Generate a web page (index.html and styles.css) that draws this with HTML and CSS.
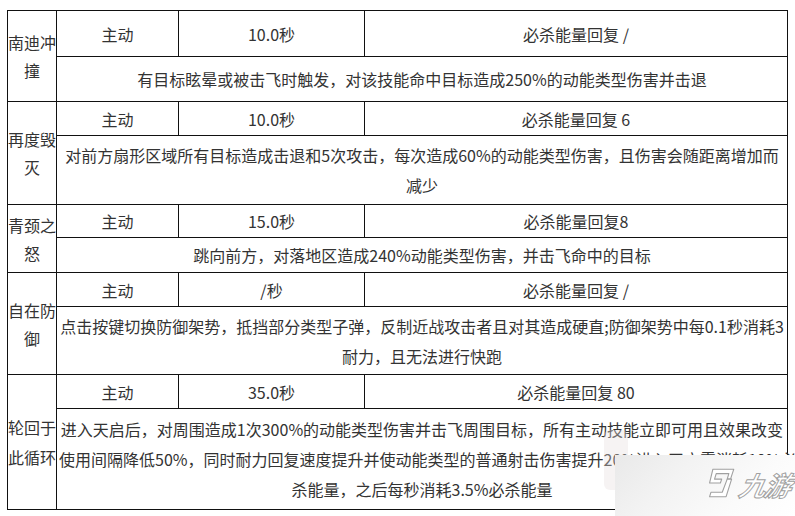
FILE: index.html
```html
<!DOCTYPE html>
<html lang="zh-CN">
<head>
<meta charset="utf-8">
<title>技能表</title>
<link rel="stylesheet" href="styles.css">
</head>
<body>
<div class="page">
<table class="skills">
  <colgroup>
    <col class="c-name"><col class="c-type"><col class="c-cd"><col class="c-energy">
  </colgroup>
  <tr class="h46">
    <td rowspan="2" class="name">南迪冲<br>撞</td>
    <td>主动</td><td>10.0秒</td><td>必杀能量回复 /</td>
  </tr>
  <tr class="h45">
    <td colspan="3" class="desc">有目标眩晕或被击飞时触发，对该技能命中目标造成250%的动能类型伤害并击退</td>
  </tr>
  <tr class="h34">
    <td rowspan="2" class="name">再度毁<br>灭</td>
    <td>主动</td><td>10.0秒</td><td>必杀能量回复 6</td>
  </tr>
  <tr class="h69">
    <td colspan="3" class="desc">对前方扇形区域所有目标造成击退和5次攻击，每次造成60%的动能类型伤害，且伤害会随距离增加而<br>减少</td>
  </tr>
  <tr class="h33">
    <td rowspan="2" class="name">青颈之<br>怒</td>
    <td>主动</td><td>15.0秒</td><td>必杀能量回复8</td>
  </tr>
  <tr class="h35">
    <td colspan="3" class="desc">跳向前方，对落地区造成240%动能类型伤害，并击飞命中的目标</td>
  </tr>
  <tr class="h34">
    <td rowspan="2" class="name">自在防<br>御</td>
    <td>主动</td><td>/秒</td><td>必杀能量回复 /</td>
  </tr>
  <tr class="h68">
    <td colspan="3" class="desc">点击按键切换防御架势，抵挡部分类型子弹，反制近战攻击者且对其造成硬直;防御架势中每0.1秒消耗3<br>耐力，且无法进行快跑</td>
  </tr>
  <tr class="h34">
    <td rowspan="2" class="name name-wide">轮回于<br>此循环</td>
    <td>主动</td><td>35.0秒</td><td>必杀能量回复 80</td>
  </tr>
  <tr class="h101">
    <td colspan="3" class="desc">进入天启后，对周围造成1次300%的动能类型伤害并击飞周围目标，所有主动技能立即可用且效果改变<br>使用间隔降低50%，同时耐力回复速度提升并使动能类型的普通射击伤害提升20%进入天启需消耗10%必<br>杀能量，之后每秒消耗3.5%必杀能量</td>
  </tr>
</table>

<div class="ghost"></div>
<div class="watermark">
  <svg class="wm-nine" viewBox="0 0 30 30" width="33" height="33" aria-hidden="true">
    <path d="M9 2 L28 2 L25 11 L22 11 L23.5 6 L12 6 L10.5 11 L17 11 L15.8 14.5 L6 14.5 Z" fill="#fff" stroke="#a0a0a0" stroke-width="1" stroke-linejoin="round"/>
    <path d="M22 11 L26 11 L21 27 L6 27 L7.2 23 L17.5 23 Z" fill="#fff" stroke="#a0a0a0" stroke-width="1" stroke-linejoin="round"/>
  </svg>
  <span class="wm-text">九游</span>
</div>
</div>
</body>
</html>
```
FILE: styles.css
```css
html, body {
  margin: 0;
  padding: 0;
  background: #fff;
}
.page {
  position: relative;
  width: 795px;
  height: 516px;
  overflow: hidden;
  padding-top: 10px;
  padding-left: 7px;
  box-sizing: border-box;
}
.skills {
  border-collapse: collapse;
  table-layout: fixed;
  width: 780px;
  font-family: "Noto Sans CJK SC", "Microsoft YaHei", sans-serif;
  font-size: 16px;
  color: #333;
}
.c-name { width: 49px; }
.c-type { width: 122px; }
.c-cd { width: 186px; }
.c-energy { width: 423px; }
.skills td {
  border: 1px solid #111;
  padding: 0;
  text-align: center;
  vertical-align: middle;
  line-height: 30px;
  white-space: nowrap;
}
.skills td.name {
  line-height: 28px;
}
.skills td.name-wide {
  line-height: 30px;
}
.skills td.desc {
  padding: 0 2px;
  line-height: 30px;
}
.h33 { height: 33px; }
.h34 { height: 34px; }
.h35 { height: 35px; }
.h45 { height: 45px; }
.h46 { height: 46px; }
.h68 { height: 68px; }
.h69 { height: 69px; }
.h101 { height: 101px; }

.ghost {
  position: absolute;
  left: 604px;
  top: 430px;
  width: 24px;
  height: 60px;
  border-radius: 6px;
  background: rgba(230, 220, 220, 0.35);
}
.watermark {
  position: absolute;
  left: 615px;
  top: 455px;
  width: 180px;
  height: 61px;
  background: linear-gradient(135deg, #e9e9e9 0%, #f3f3f3 35%, #fbfbfb 70%, #fff 100%);
  display: flex;
  align-items: center;
  padding-left: 88px;
  box-sizing: border-box;
  gap: 4px;
}
.wm-nine {
  flex: none;
  margin-top: -4px;
}
.wm-text {
  font-family: "Noto Sans CJK SC", sans-serif;
  font-size: 27px;
  font-weight: 700;
  font-style: italic;
  color: #fff;
  -webkit-text-stroke: 1px #a0a0a0;
  letter-spacing: -2px;
  line-height: 1;
  margin-top: -3px;
  transform: skewX(-12deg);
  white-space: nowrap;
}
```
